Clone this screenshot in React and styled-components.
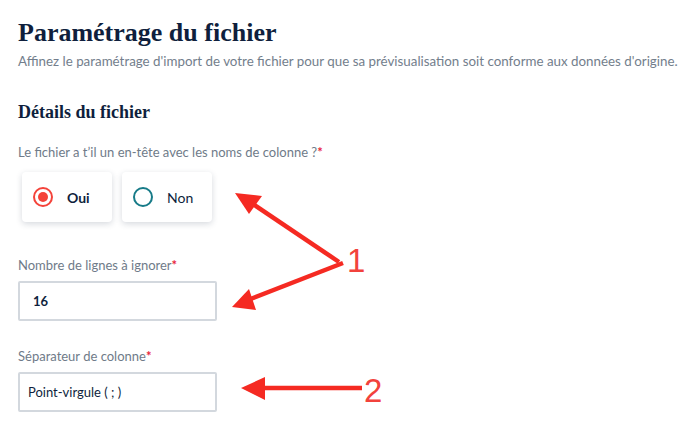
import React from "react";
import styled, { createGlobalStyle } from "styled-components";

const GlobalStyle = createGlobalStyle`
  html, body {
    margin: 0;
    padding: 0;
    background: #fff;
  }
  body {
    font-family: Lato, "Liberation Sans", sans-serif;
    color: #0f1f3d;
  }
`;

const App = () => {
  return (
    <Page>
      <GlobalStyle />
      <Title>Paramétrage du fichier</Title>
      <Subtitle>
        Affinez le paramétrage d'import de votre fichier pour que sa prévisualisation soit conforme aux données d'origine.
      </Subtitle>

      <SectionTitle>Détails du fichier</SectionTitle>

      <Label>
        Le fichier a t’il un en-tête avec les noms de colonne ?<Required>*</Required>
      </Label>
      <RadioRow>
        <RadioCard>
          <RadioMark checked />
          <RadioText checked>Oui</RadioText>
        </RadioCard>
        <RadioCard>
          <RadioMark />
          <RadioText>Non</RadioText>
        </RadioCard>
      </RadioRow>

      <Field spacing={34}>
        <Label>
          Nombre de lignes à ignorer<Required>*</Required>
        </Label>
        <Input bold>16</Input>
      </Field>

      <Field spacing={26}>
        <Label>
          Séparateur de colonne<Required>*</Required>
        </Label>
        <Input>Point-virgule ( ; )</Input>
      </Field>

      <Annotations width="687" height="426" viewBox="0 0 687 426">
        <g stroke="#f52a22" strokeWidth="4.5" fill="none">
          <line x1="339" y1="262" x2="250" y2="202" />
          <line x1="343" y1="263" x2="248" y2="300" />
          <line x1="362" y1="388" x2="262" y2="388" />
        </g>
        <g fill="#f52a22">
          <polygon points="235,193 262,196 249,214" />
          <polygon points="232,307 249,289 256,310" />
          <polygon points="241,388 265,377 265,400" />
        </g>
        <AnnotationText x="347" y="272">1</AnnotationText>
        <AnnotationText x="364" y="402">2</AnnotationText>
      </Annotations>
    </Page>
  );
};

const Page = styled.div`
  position: relative;
  width: 687px;
  height: 426px;
  box-sizing: border-box;
  padding: 17px 18px 0;
  overflow: hidden;
`;

const Title = styled.h1`
  margin: 0;
  font-family: "Liberation Serif", serif;
  font-weight: 700;
  font-size: 26px;
  line-height: 32px;
  color: #0f1f3d;
`;

const Subtitle = styled.p`
  margin: 3px 0 0;
  font-size: 13.35px;
  line-height: 18px;
  color: #737e8c;
  white-space: nowrap;
`;

const SectionTitle = styled.h2`
  margin: 30px 0 0;
  font-family: "Liberation Serif", serif;
  font-weight: 700;
  font-size: 18px;
  line-height: 24px;
  color: #0f1f3d;
`;

const Label = styled.div`
  font-size: 13px;
  line-height: 18px;
  color: #6f7b89;
  margin-top: 19px;
`;

const Required = styled.span`
  color: #e8243a;
  font-weight: 700;
`;

const RadioRow = styled.div`
  display: flex;
  gap: 10px;
  margin: 11px 0 0 4px;
`;

const RadioCard = styled.div`
  display: flex;
  align-items: center;
  gap: 14px;
  box-sizing: border-box;
  width: 90px;
  height: 50px;
  padding-left: 11px;
  background: #fff;
  border-radius: 4px;
  box-shadow: 0 2px 6px rgba(30, 45, 70, 0.18);
`;

const RadioMark = styled.span`
  box-sizing: border-box;
  width: 20px;
  height: 20px;
  border-radius: 50%;
  border: 2px solid ${(p) => (p.checked ? "#f4433a" : "#177b88")};
  position: relative;
  flex-shrink: 0;

  &::after {
    content: "";
    display: ${(p) => (p.checked ? "block" : "none")};
    position: absolute;
    inset: 3px;
    border-radius: 50%;
    background: #f4433a;
  }
`;

const RadioText = styled.span`
  font-size: 14px;
  font-weight: ${(p) => (p.checked ? 700 : 400)};
  color: #0f1f3d;
`;

const Field = styled.div`
  display: flex;
  flex-direction: column;
  margin-top: ${(p) => p.spacing}px;

  & > ${Label} {
    margin-top: 0;
  }
`;

const Input = styled.div`
  box-sizing: border-box;
  width: 199px;
  height: 40px;
  margin-top: 7px;
  padding: 0 0 0 ${(p) => (p.bold ? "13px" : "8px")};
  display: flex;
  align-items: center;
  border: 2px solid #d3d8de;
  border-radius: 2px;
  font-size: 13px;
  font-weight: ${(p) => (p.bold ? 700 : 400)};
  color: #0f1f3d;
`;

const Annotations = styled.svg`
  position: absolute;
  left: 0;
  top: 0;
  pointer-events: none;
`;

const AnnotationText = styled.text`
  font-family: "Liberation Sans", Arial, sans-serif;
  font-size: 33px;
  fill: #f2423c;
`;

export default App;
